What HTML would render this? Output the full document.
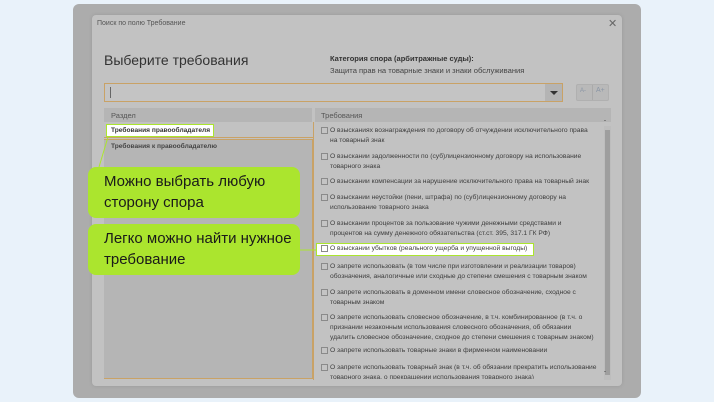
<!DOCTYPE html>
<html><head><meta charset="utf-8"><style>
*{margin:0;padding:0;box-sizing:border-box}
body{width:714px;height:402px;background:#e9f2fa;position:relative;overflow:hidden;font-family:"Liberation Sans","DejaVu Sans",sans-serif;color:#3a3a3a}
.a{position:absolute}
.t{position:absolute;white-space:nowrap}
.it{position:absolute;left:321px;width:282px;font-size:6.7px;line-height:10px;color:#3d3d3d;white-space:nowrap;overflow:hidden}
.cb{position:absolute;left:0;top:1px;width:7px;height:7px;border:1px solid #8a8a8a;background:#c4c4c4}
.it span{display:block;padding-left:9px}
.bub{position:absolute;left:88px;width:212px;height:51px;background:#abe52e;border-radius:8px;font-size:15px;line-height:21px;color:#1a1a1a;padding:4px 0 0 16px;white-space:nowrap}
</style></head><body>
<div class="a" style="left:73px;top:4px;width:568px;height:394px;background:#acacac;border-radius:6px"></div>
<div class="a" style="left:92px;top:15px;width:530px;height:371px;background:#c2c2c2;border-radius:4px;box-shadow:0 0 3px #999"></div>
<div class="t" style="left:97px;top:20px;font-size:7px;color:#555">Поиск по полю Требование</div>
<div class="t" style="left:608px;top:17px;font-size:11px;color:#666">✕</div>
<div class="t" style="left:104px;top:52px;font-size:14px;color:#333">Выберите требования</div>
<div class="t" style="left:330px;top:54px;font-size:7.5px;font-weight:bold;color:#333">Категория спора (арбитражные суды):</div>
<div class="t" style="left:330px;top:66px;font-size:7.6px;color:#444">Защита прав на товарные знаки и знаки обслуживания</div>
<div class="a" style="left:104px;top:83px;width:459px;height:19px;border:1px solid #c9a266;background:#c4c4c4"></div>
<div class="a" style="left:110px;top:87px;width:1px;height:11px;background:#666"></div>
<div class="a" style="left:545px;top:84px;width:17px;height:17px;background:#b4b4b4"></div>
<div class="a" style="left:550px;top:91px;border-left:4px solid transparent;border-right:4px solid transparent;border-top:4px solid #333"></div>
<div class="a" style="left:576px;top:84px;width:33px;height:17px;background:#b9b9b9;border:1px solid #b0b0b0;border-radius:2px"></div>
<div class="a" style="left:592px;top:85px;width:1px;height:15px;background:#aaa"></div>
<div class="t" style="left:580px;top:88px;font-size:6px;color:#8a95a5">A-</div>
<div class="t" style="left:596px;top:87px;font-size:7px;color:#8a95a5">A+</div>
<div class="a" style="left:104px;top:108px;width:208px;height:14px;background:#b5b5b5"></div>
<div class="t" style="left:111px;top:111px;font-size:7.5px;color:#555">Раздел</div>
<div class="a" style="left:315px;top:108px;width:296px;height:14px;background:#b5b5b5"></div>
<div class="t" style="left:321px;top:111px;font-size:7.5px;color:#555">Требования</div>
<div class="a" style="left:104px;top:122px;width:209px;height:16px;border-bottom:1px solid #c9a266"></div>
<div class="a" style="left:104px;top:139px;width:209px;height:240px;border:1px solid #c9a266;border-left:none;background:#b5b5b5"></div>
<div class="a" style="left:313px;top:122px;width:1px;height:258px;background:#c9a266"></div>
<div class="a" style="left:106px;top:124px;width:108px;height:13px;background:#fff;border:1px solid #abe52e"></div>
<div class="t" style="left:111px;top:127px;font-size:6.6px;font-weight:bold;color:#333">Требования правообладателя</div>
<div class="t" style="left:111px;top:143px;font-size:6.6px;font-weight:bold;color:#444">Требования к правообладателю</div>
<svg class="a" style="left:0;top:0" width="714" height="402"><line x1="108" y1="137" x2="99" y2="167" stroke="#abe52e" stroke-width="1"/><line x1="300" y1="250" x2="316" y2="250" stroke="#abe52e" stroke-width="1"/></svg>
<div class="bub" style="top:167px">Можно выбрать любую<br>сторону спора</div>
<div class="bub" style="top:224px">Легко можно найти нужное<br>требование</div>
<div class="a" style="left:316px;top:243px;width:218px;height:13px;background:#fff;border:1px solid #abe52e"></div>
<div class="it" style="top:126px"><div class="cb"></div><span>О взысканиях вознаграждения по договору об отчуждении исключительного права<br>на товарный знак</span></div>
<div class="it" style="top:152px"><div class="cb"></div><span>О взыскании задолженности по (суб)лицензионному договору на использование<br>товарного знака</span></div>
<div class="it" style="top:177px"><div class="cb"></div><span>О взыскании компенсации за нарушение исключительного права на товарный знак</span></div>
<div class="it" style="top:193px"><div class="cb"></div><span>О взыскании неустойки (пени, штрафа) по (суб)лицензионному договору на<br>использование товарного знака</span></div>
<div class="it" style="top:219px"><div class="cb"></div><span>О взыскании процентов за пользование чужими денежными средствами и<br>процентов на сумму денежного обязательства (ст.ст. 395, 317.1 ГК РФ)</span></div>
<div class="it" style="top:244px"><div class="cb" style="background:#fff"></div><span>О взыскании убытков (реального ущерба и упущенной выгоды)</span></div>
<div class="it" style="top:262px"><div class="cb"></div><span>О запрете использовать (в том числе при изготовлении и реализации товаров)<br>обозначения, аналогичные или сходные до степени смешения с товарным знаком</span></div>
<div class="it" style="top:288px"><div class="cb"></div><span>О запрете использовать в доменном имени словесное обозначение, сходное с<br>товарным знаком</span></div>
<div class="it" style="top:313px"><div class="cb"></div><span>О запрете использовать словесное обозначение, в т.ч. комбинированное (в т.ч. о<br>признании незаконным использования словесного обозначения, об обязании<br>удалить словесное обозначение, сходное до степени смешения с товарным знаком)</span></div>
<div class="it" style="top:346px"><div class="cb"></div><span>О запрете использовать товарные знаки в фирменном наименовании</span></div>
<div class="it" style="top:363px;height:16px"><div class="cb"></div><span>О запрете использовать товарный знак (в т.ч. об обязании прекратить использование<br>товарного знака, о прекращении использования товарного знака)</span></div>
<div class="a" style="left:604px;top:126px;width:7px;height:254px;background:#bdbdbd"></div>
<div class="a" style="left:605px;top:130px;width:5px;height:245px;background:#9e9e9e"></div>
<div class="t" style="left:604px;top:121px;font-size:6px;color:#444">ˆ</div>
<div class="t" style="left:604px;top:372px;font-size:6px;color:#444">ˇ</div>
</body></html>
